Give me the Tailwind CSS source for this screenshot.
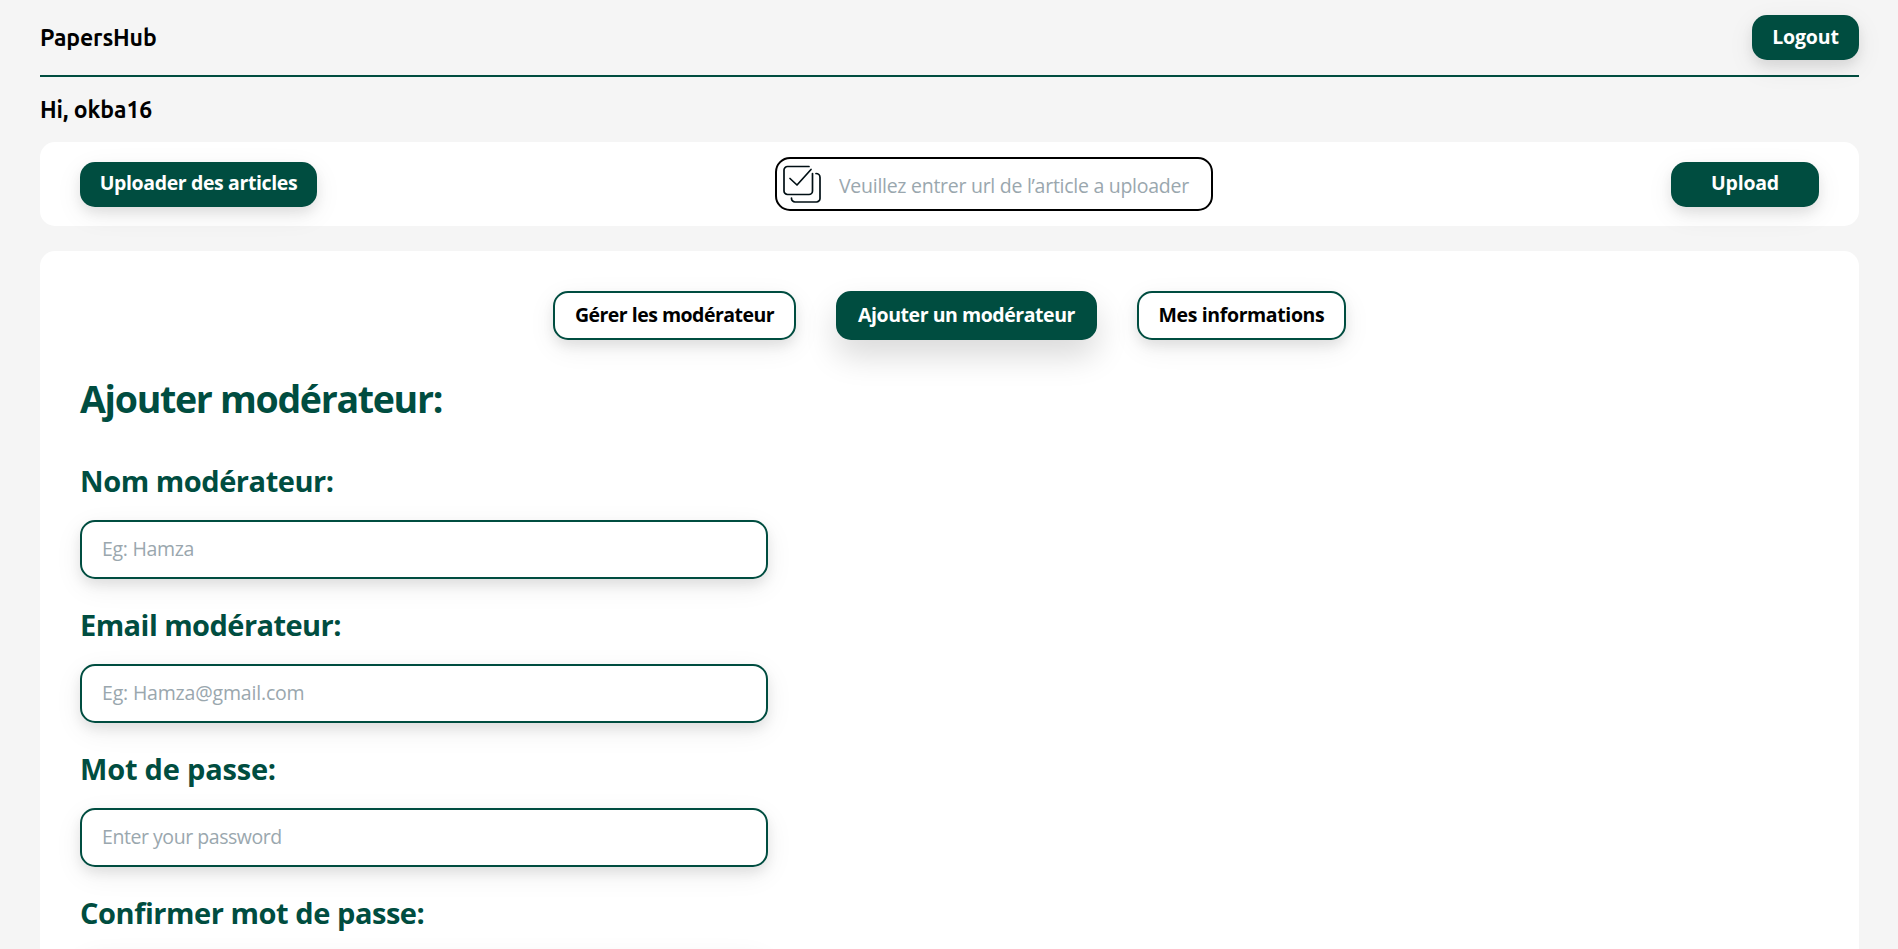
<!DOCTYPE html>
<html lang="fr">
<head>
  <meta charset="UTF-8">
  <meta name="viewport" content="width=device-width, initial-scale=1.0">
  <title>PapersHub</title>
  <script src="https://cdn.jsdelivr.net/npm/@tailwindcss/browser@4"></script>
</head>
<body class="h-screen overflow-hidden bg-[#f5f5f5] pl-10 pr-[39px] font-['Segoe_UI','Open_Sans',sans-serif] text-black">

  <!-- Header -->
  <header class="flex h-[77px] items-center justify-between border-b-2 border-[#004d40]">
    <h1 class="pt-0.5 font-[Ubuntu,'Noto_Sans',sans-serif] text-[23px] font-bold tracking-[-0.15px]">PapersHub</h1>
    <button class="h-[45px] w-[107px] rounded-[15px] bg-[#004d40] pb-0.5 text-[19.5px] font-bold tracking-[-0.15px] text-white shadow-[0_6px_12px_rgba(0,0,0,0.08),0_8px_28px_rgba(0,0,0,0.07)]">Logout</button>
  </header>

  <h2 class="flex h-[65px] items-center pt-0.5 font-[Ubuntu,'Noto_Sans',sans-serif] text-[23px] font-bold tracking-[-0.1px]">Hi, okba16</h2>

  <!-- Upload -->
  <section class="flex h-[84px] items-center justify-between rounded-[15px] bg-white px-10">
    <button class="h-[45px] w-[237px] rounded-[15px] bg-[#004d40] pb-0.5 text-[19.5px] font-bold tracking-[-0.38px] whitespace-nowrap text-white shadow-[0_6px_12px_rgba(0,0,0,0.08),0_8px_28px_rgba(0,0,0,0.07)]">Uploader des articles</button>
    <div class="flex h-[54px] w-[438px] items-center rounded-[15px] border-2 border-black pl-1.5">
      <svg class="h-[38px] w-[38px] shrink-0" viewBox="0 0 38 38" fill="none" stroke="#000f14" stroke-width="1.7" stroke-linecap="round" stroke-linejoin="round">
        <path d="M26 1.5H4.5A3.5 3.5 0 0 0 1 5v21a3.5 3.5 0 0 0 3.5 3.5H26a3.5 3.5 0 0 0 3.5-3.5V8.5"/>
        <path d="M7 13.5l7 6.5L28 4.5"/>
        <path d="M33 8.5a4 4 0 0 1 4 4v21a3.5 3.5 0 0 1-3.5 3.5H12a3.5 3.5 0 0 1-3.5-3.5V33"/>
      </svg>
      <input type="text" placeholder="Veuillez entrer url de l’article a uploader" class="ml-[18px] w-[370px] pt-1 text-[19.5px] tracking-[-0.27px] outline-none placeholder:text-[#9aa7ae]">
    </div>
    <button class="h-[45px] w-[148px] rounded-[15px] bg-[#004d40] pb-0.5 text-[19.5px] font-bold tracking-[-0.2px] text-white shadow-[0_6px_12px_rgba(0,0,0,0.08),0_8px_28px_rgba(0,0,0,0.07)]">Upload</button>
  </section>

  <main class="mt-[25px] h-[1000px] rounded-[15px] bg-white px-10 pt-10">
    <!-- Onglets -->
    <nav class="flex justify-center gap-10 text-[19.5px] font-bold whitespace-nowrap">
      <button class="h-[49px] w-[243px] rounded-[15px] border-2 border-[#004d40] bg-white pb-0.5 tracking-[-0.52px] shadow-[0_6px_12px_rgba(0,0,0,0.08),0_8px_28px_rgba(0,0,0,0.07)]">Gérer les modérateur</button>
      <button class="h-[49px] w-[261px] rounded-[15px] border-2 border-[#004d40] bg-[#004d40] pb-0.5 tracking-[-0.45px] text-white shadow-[0_16px_32px_rgba(0,0,0,0.15)]">Ajouter un modérateur</button>
      <button class="h-[49px] w-[209px] rounded-[15px] border-2 border-[#004d40] bg-white pb-0.5 tracking-[-0.38px] shadow-[0_6px_12px_rgba(0,0,0,0.08),0_8px_28px_rgba(0,0,0,0.07)]">Mes informations</button>
    </nav>

    <h2 class="mt-8 h-[54px] text-[37.5px] leading-[54px] font-bold tracking-[-1.3px] text-[#004d40]">Ajouter modérateur:</h2>

    <!-- Formulaire -->
    <form class="mt-[34px] flex w-[688px] flex-col text-[#004d40]">
      <label class="mb-[19px] h-[41px] text-[29px] leading-[41px] font-bold tracking-[-0.45px]">Nom modérateur:</label>
      <input type="text" placeholder="Eg: Hamza" class="mb-[25px] h-[59px] rounded-[15px] border-2 border-[#004d40] px-5 pb-0.5 text-[19.5px] tracking-[-0.3px] shadow-[0_6px_12px_rgba(0,0,0,0.08),0_8px_28px_rgba(0,0,0,0.07)] placeholder:text-[#9aa7ae]">
      <label class="mb-[19px] h-[41px] text-[29px] leading-[41px] font-bold tracking-[-0.55px]">Email modérateur:</label>
      <input type="email" placeholder="Eg: Hamza@gmail.com" class="mb-[25px] h-[59px] rounded-[15px] border-2 border-[#004d40] px-5 pb-0.5 text-[19.5px] tracking-[-0.18px] shadow-[0_6px_12px_rgba(0,0,0,0.08),0_8px_28px_rgba(0,0,0,0.07)] placeholder:text-[#9aa7ae]">
      <label class="mb-[19px] h-[41px] text-[29px] leading-[41px] font-bold tracking-[-0.2px]">Mot de passe:</label>
      <input type="password" placeholder="Enter your password" class="mb-[25px] h-[59px] rounded-[15px] border-2 border-[#004d40] px-5 pb-0.5 text-[19.5px] tracking-[-0.45px] shadow-[0_6px_12px_rgba(0,0,0,0.08),0_8px_28px_rgba(0,0,0,0.07)] placeholder:text-[#9aa7ae]">
      <label class="mb-[19px] h-[41px] text-[29px] leading-[41px] font-bold tracking-[-0.45px]">Confirmer mot de passe:</label>
      <input type="password" placeholder="Confirm your password" class="h-[59px] rounded-[15px] border-2 border-[#004d40] px-5 pb-0.5 text-[19.5px] tracking-[-0.45px] shadow-[0_6px_12px_rgba(0,0,0,0.08),0_8px_28px_rgba(0,0,0,0.07)] placeholder:text-[#9aa7ae]">
    </form>
  </main>

</body>
</html>
